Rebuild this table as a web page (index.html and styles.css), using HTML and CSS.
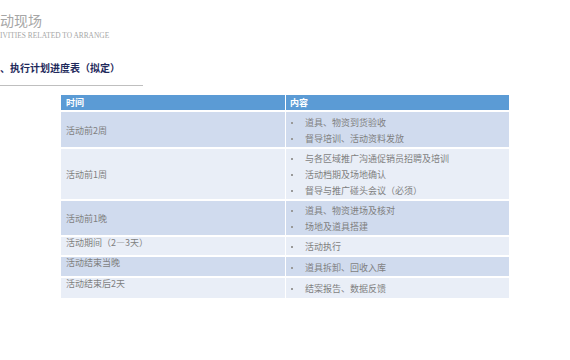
FILE: index.html
```html
<!DOCTYPE html>
<html lang="zh">
<head>
<meta charset="utf-8">
<link rel="stylesheet" href="styles.css">
</head>
<body>
<div class="page">
  <div class="title">动现场</div>
  <div class="subtitle">IVITIES RELATED TO ARRANGE</div>
  <div class="heading">、执行计划进度表（拟定）</div>
  <div class="rule"></div>
  <table class="plan">
    <thead>
      <tr class="head"><th class="c1">时间</th><th>内容</th></tr>
    </thead>
    <tbody>
      <tr class="odd h35"><td class="when">活动前2周</td><td class="what"><ul><li>道具、物资到货验收</li><li>督导培训、活动资料发放</li></ul></td></tr>
      <tr class="even h50"><td class="when">活动前1周</td><td class="what"><ul><li>与各区域推广沟通促销员招聘及培训</li><li>活动档期及场地确认</li><li>督导与推广碰头会议（必须）</li></ul></td></tr>
      <tr class="odd h34"><td class="when">活动前1晚</td><td class="what"><ul><li>道具、物资进场及核对</li><li>场地及道具搭建</li></ul></td></tr>
      <tr class="even h18"><td class="when top">活动期间（2—3天）</td><td class="what"><ul><li>活动执行</li></ul></td></tr>
      <tr class="odd h19"><td class="when top">活动结束当晚</td><td class="what"><ul><li>道具拆卸、回收入库</li></ul></td></tr>
      <tr class="even h20"><td class="when top">活动结束后2天</td><td class="what"><ul><li>结案报告、数据反馈</li></ul></td></tr>
    </tbody>
  </table>
</div>
</body>
</html>
```

FILE: styles.css
```css
html, body {
  margin: 0;
  padding: 0;
  background: #ffffff;
}
body {
  font-family: "Noto Sans CJK SC", "Noto Sans", sans-serif;
  width: 570px;
  height: 360px;
  overflow: hidden;
}
.page {
  padding-top: 12px;
}
.title {
  font-size: 14px;
  line-height: 17px;
  color: #a6a6a6;
}
.subtitle {
  font-family: "Liberation Serif", serif;
  font-size: 7.4px;
  line-height: 8px;
  color: #a6a6a6;
  margin-top: 3px;
}
.heading {
  font-size: 10px;
  line-height: 12px;
  font-weight: bold;
  color: #1f2a5c;
  margin-top: 22px;
}
.rule {
  width: 143px;
  height: 1px;
  background: #bfbfbf;
  margin-top: 11px;
}
.plan {
  margin-top: 7px;
  margin-left: 60px;
  width: 450px;
  border-collapse: separate;
  border-spacing: 1px 2px;
  table-layout: fixed;
  font-size: 9px;
  color: #7f7f7f;
}
.plan th {
  background: #5b9bd5;
  color: #ffffff;
  font-weight: bold;
  text-align: left;
  padding: 0 0 0 4px;
  height: 15px;
  line-height: 15px;
}
.plan th.c1 {
  width: 219px;
  padding-left: 5px;
}
.plan td {
  padding: 0;
  vertical-align: middle;
}
.odd td { background: #d0dbee; }
.even td { background: #e9eef7; }
.h35 { height: 35px; }
.h50 { height: 50px; }
.h34 { height: 34px; }
.h18 { height: 18px; }
.h19 { height: 19px; }
.h20 { height: 20px; }
.when {
  padding-left: 5px !important;
  padding-top: 2px !important;
  line-height: 12px;
}
.when.top {
  vertical-align: top !important;
  padding-top: 0 !important;
}
.what {
  padding: 2px 0 0 5px !important;
}
.what ul {
  list-style: none;
  margin: 0;
  padding: 0;
}
.what li {
  display: flex;
  align-items: center;
  line-height: 16px;
  white-space: nowrap;
}
.what li::before {
  content: "";
  width: 2px;
  height: 2px;
  background: #9a9a9a;
  margin-right: 12px;
  flex: none;
}
```
